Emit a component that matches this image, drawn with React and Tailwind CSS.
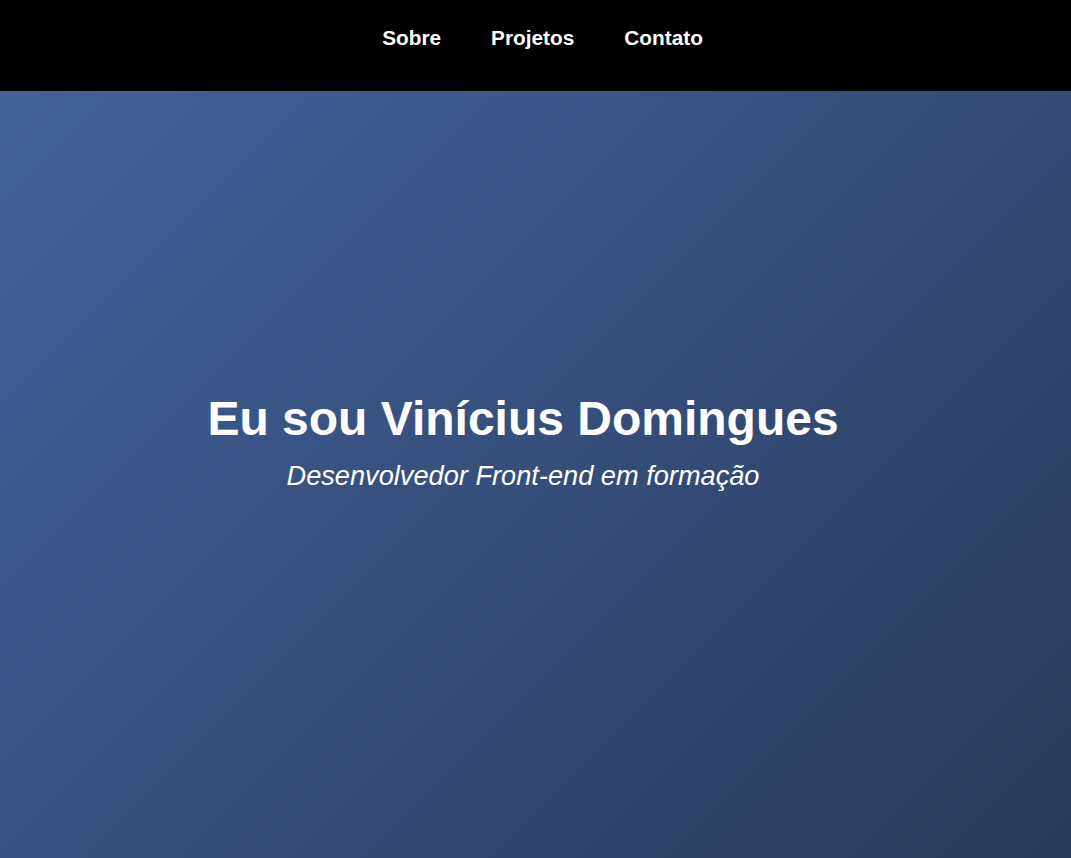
// App.jsx

export default function App() {
  const links = ['Sobre', 'Projetos', 'Contato'];

  return (
    <div className="flex min-h-screen flex-col font-['Liberation_Sans',Arial,sans-serif] text-white">
      {/* Header */}
      <header className="h-[91px] bg-black pt-[26px]">
        <nav className="flex justify-center gap-[50px] pl-[14px]">
          {links.map((link) => (
            <a key={link} href="#" className="text-[20.8px] font-bold leading-[1.15] text-white">
              {link}
            </a>
          ))}
        </nav>
      </header>

      {/* Hero */}
      <section className="flex h-[767px] flex-col items-center justify-center bg-[linear-gradient(135deg,#42639a_0%,#283a5a_100%)] pb-[66px] pr-[25px]">
        <h1 className="text-[48px] font-bold leading-[1.15]">Eu sou Vinícius Domingues</h1>
        <p className="mt-[14px] text-[27.2px] italic leading-[1.15]">Desenvolvedor Front-end em formação</p>
      </section>
    </div>
  );
}
